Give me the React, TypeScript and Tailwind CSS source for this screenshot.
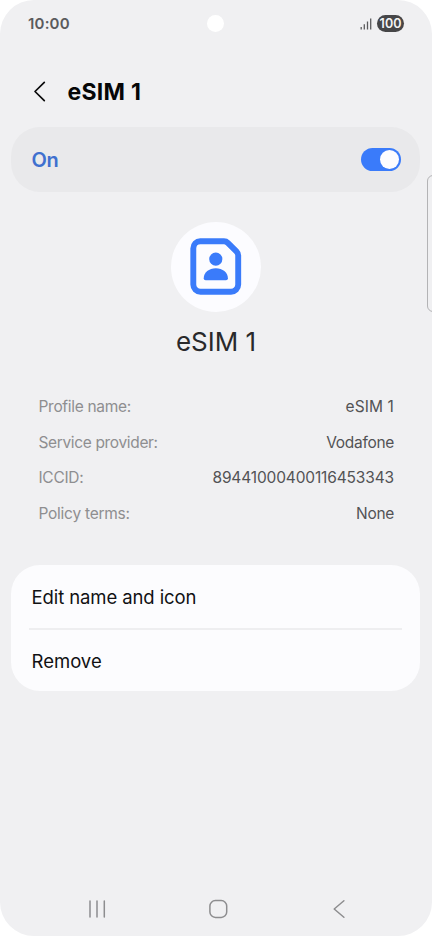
import React from "react";

interface DetailRow {
	label: string;
	value: string;
	labelClass: string;
	valueClass: string;
}

const details: DetailRow[] = [
	{
		label: "Profile name:",
		value: "eSIM 1",
		labelClass: "tracking-[-0.3px]",
		valueClass: "tracking-[0.1px]",
	},
	{
		label: "Service provider:",
		value: "Vodafone",
		labelClass: "tracking-[-0.35px]",
		valueClass: "tracking-[-0.3px]",
	},
	{
		label: "ICCID:",
		value: "89441000400116453343",
		labelClass: "tracking-[-0.3px]",
		valueClass: "tracking-[-0.15px]",
	},
	{
		label: "Policy terms:",
		value: "None",
		labelClass: "tracking-[-0.25px]",
		valueClass: "tracking-[-0.3px]",
	},
];

const StatusBar: React.FC = () => (
	<div className="relative flex h-12 items-center justify-between pr-[28px] pb-px pl-[28px] text-[#5b5b5d]">
		<span className="text-[15px] leading-none font-semibold tracking-[0.2px]">
			10:00
		</span>
		{/* Camera hole */}
		<div className="absolute top-[15px] left-[207px] h-[17px] w-[17px] rounded-full bg-white" />
		<div className="flex items-center gap-[5px]">
			<svg width="12" height="12" viewBox="0 0 12 12" fill="none">
				<path
					d="M1.2 9v2.4M4.3 6.2v5.2M7.5 3.4v8M10.7 0.4v11"
					stroke="#5b5b5d"
					strokeWidth="1.3"
				/>
			</svg>
			<span className="flex h-[17px] w-[27px] items-center justify-center rounded-full bg-[#464648] pt-px text-[12.5px] leading-none font-semibold text-[#f4f4f5]">
				100
			</span>
		</div>
	</div>
);

const Header: React.FC = () => (
	<header className="flex h-[79px] items-center pt-[8px] pl-[33px]">
		<svg width="14" height="22" viewBox="0 0 14 22" fill="none">
			<path
				d="M11.3 1.3L2 10.5L11.3 19.7"
				stroke="#0b0b0c"
				strokeWidth="1.7"
				strokeLinecap="round"
				strokeLinejoin="round"
			/>
		</svg>
		<h1 className="ml-[20.5px] pt-[2px] text-[23px] leading-none font-bold tracking-[0.3px] text-[#060607]">
			eSIM 1
		</h1>
	</header>
);

const SimIcon: React.FC = () => (
	<svg width="52" height="58" viewBox="0 0 52 58" fill="none">
		<path
			d="M10.3 3.2H34Q36.2 3.2 37.8 4.8L46.4 13.4Q48.2 15.2 48.2 17.6V46.6A7.2 7.2 0 0 1 41 53.8H10.5A7.2 7.2 0 0 1 3.3 46.6V10.4A7.2 7.2 0 0 1 10.3 3.2Z"
			stroke="#3a7bfa"
			strokeWidth="5.9"
			strokeLinejoin="round"
		/>
		<circle cx="25.8" cy="21.1" r="6.6" fill="#3a7bfa" />
		<path
			d="M13.7 40.3C13.7 34.4 19 30.2 25.8 30.2S37.9 34.4 37.9 40.3Q37.9 42.3 36 42.3H15.6Q13.7 42.3 13.7 40.3Z"
			fill="#3a7bfa"
		/>
	</svg>
);

const NavBar: React.FC = () => (
	<nav className="mt-auto flex h-[54px] items-center justify-between pr-[85px] pl-[86px]">
		<svg width="20" height="20" viewBox="0 0 20 20" fill="none">
			<path
				d="M4 2v16M11 2v16M18.3 2v16"
				stroke="#8d8d8f"
				strokeWidth="1.5"
				strokeLinecap="round"
			/>
		</svg>
		<svg width="20" height="20" viewBox="0 0 20 20" fill="none">
			<rect
				x="0.9"
				y="1.6"
				width="16.8"
				height="16.8"
				rx="5.5"
				stroke="#8d8d8f"
				strokeWidth="1.5"
			/>
		</svg>
		<svg width="16" height="20" viewBox="0 0 16 20" fill="none">
			<path
				d="M12.9 1.7L3.2 10L12.9 18.3"
				stroke="#8d8d8f"
				strokeWidth="1.5"
				strokeLinecap="round"
				strokeLinejoin="round"
			/>
		</svg>
	</nav>
);

const App: React.FC = () => {
	return (
		<div className="h-[936px] w-[432px] overflow-hidden bg-white font-['Inter',sans-serif]">
			<div className="relative flex h-full flex-col overflow-hidden rounded-[34px] bg-[#f0f0f2]">
				<StatusBar />
				<Header />

				<div className="mr-3 ml-[11px] flex h-[65px] items-center justify-between rounded-[29px] bg-[#e9e9eb] pr-[19.5px] pl-[20.5px]">
					<span className="text-[20px] leading-none font-semibold tracking-[-0.4px] text-[#3f70cf]">
						On
					</span>
					<div className="flex h-[23px] w-10 items-center justify-end rounded-full bg-[#3a7bfa] pr-[2px]">
						<div className="h-[19px] w-[19px] rounded-full bg-[#fcfcff]" />
					</div>
				</div>

				<div className="mt-[30px] flex flex-col items-center">
					<div className="flex h-[90px] w-[90px] items-center justify-center rounded-full bg-[#fcfcff]">
						<SimIcon />
					</div>
					<h2 className="mt-[16px] text-[26px] leading-[28px] text-[#29292b]">
						eSIM 1
					</h2>
				</div>

				<dl className="mt-[33px] pr-[38px] pl-[38.5px] text-[15.5px]">
					{details.map((row) => (
						<div
							key={row.label}
							className="flex h-[35.6px] items-center justify-between"
						>
							<dt className={`text-[#8e8e90] ${row.labelClass}`}>
								{row.label}
							</dt>
							<dd className={`text-[#535355] ${row.valueClass}`}>
								{row.value}
							</dd>
						</div>
					))}
				</dl>

				<div className="mt-[34px] mr-3 ml-[11px] h-[126px] rounded-[29px] bg-[#fcfcfe] text-[18.5px] text-[#111113]">
					<div className="flex h-[63px] items-center pt-px pl-[20.5px] tracking-[-0.1px]">
						<span>Edit name and icon</span>
					</div>
					<div className="mx-[18px] h-[2px] bg-[#eeeef0]" />
					<div className="flex h-[61px] items-center pt-px pl-[20.5px]">
						<span>Remove</span>
					</div>
				</div>

				<NavBar />

				{/* Edge panel handle */}
				<div className="absolute top-[175px] left-[427px] h-[137px] w-[12px] rounded-[6px] border border-[#b3b3b5]" />
			</div>
		</div>
	);
};

export default App;
